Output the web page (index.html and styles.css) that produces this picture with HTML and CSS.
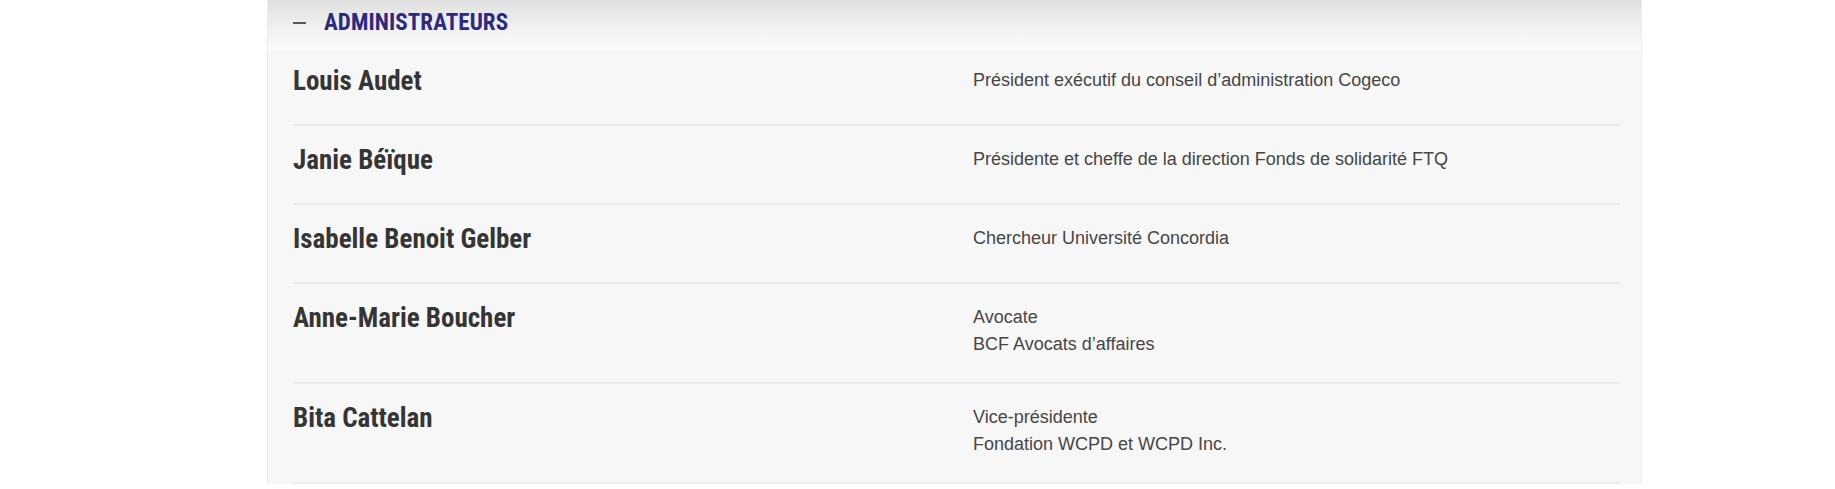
FILE: index.html
```html
<!DOCTYPE html>
<html lang="fr">
<head>
<meta charset="utf-8">
<title>Administrateurs</title>
<link rel="stylesheet" href="styles.css">
</head>
<body>
<div class="page">
  <section class="panel">
    <header class="panel-head">
      <span class="toggle" aria-hidden="true"></span>
      <h2 class="panel-title">ADMINISTRATEURS</h2>
    </header>
    <div class="panel-body">
      <div class="row first">
        <h3 class="name">Louis Audet</h3>
        <div class="desc"><p>Président exécutif du conseil d’administration Cogeco</p></div>
      </div>
      <div class="row">
        <h3 class="name">Janie Béïque</h3>
        <div class="desc"><p>Présidente et cheffe de la direction Fonds de solidarité FTQ</p></div>
      </div>
      <div class="row">
        <h3 class="name">Isabelle Benoit Gelber</h3>
        <div class="desc"><p>Chercheur Université Concordia</p></div>
      </div>
      <div class="row">
        <h3 class="name">Anne-Marie Boucher</h3>
        <div class="desc"><p>Avocate</p><p>BCF Avocats d’affaires</p></div>
      </div>
      <div class="row">
        <h3 class="name">Bita Cattelan</h3>
        <div class="desc"><p>Vice-présidente</p><p>Fondation WCPD et WCPD Inc.</p></div>
      </div>
    </div>
  </section>
</div>
</body>
</html>
```

FILE: styles.css
```css
* { box-sizing: border-box; }
html, body { margin: 0; padding: 0; background: #ffffff; }
.page {
  padding-left: 267px;
}
.panel {
  width: 1375px;
  border-left: 1px solid #ececec;
  border-right: 1px solid #ececec;
  background: #f7f7f7;
}
.panel-head {
  height: 50px;
  display: flex;
  align-items: center;
  padding-left: 25px;
  background: linear-gradient(to bottom, #e0e0e0 0%, #efefef 50%, #fbfbfb 100%);
  border-bottom: 1px solid #fdfdfd;
}
.toggle {
  display: block;
  width: 13px;
  height: 2px;
  background: #5a5a5a;
  margin: -3px 18px 0 0;
}
.panel-title {
  margin: -4px 0 0 0;
  font-family: "Roboto Condensed", Roboto, sans-serif;
  font-stretch: condensed;
  font-weight: 700;
  font-size: 23px;
  color: #2c2a80;
  letter-spacing: 0.1px;
}
.panel-body {
  padding: 0 21px 0 25px;
}
.row {
  display: grid;
  grid-template-columns: 680px 1fr;
  padding: 19px 0 24px;
  border-bottom: 2px solid #ebebeb;
}
.row.first { padding-top: 16px; }
.name {
  margin: 0 0 3px 0;
  font-family: "Roboto Condensed", Roboto, sans-serif;
  font-stretch: condensed;
  font-weight: 700;
  font-size: 27px;
  line-height: 31px;
  color: #353535;
}
.desc {
  padding-top: 1px;
}
.desc p {
  margin: 0;
  font-family: "Liberation Sans", Arial, sans-serif;
  font-size: 18px;
  line-height: 27px;
  color: #464646;
}
```
